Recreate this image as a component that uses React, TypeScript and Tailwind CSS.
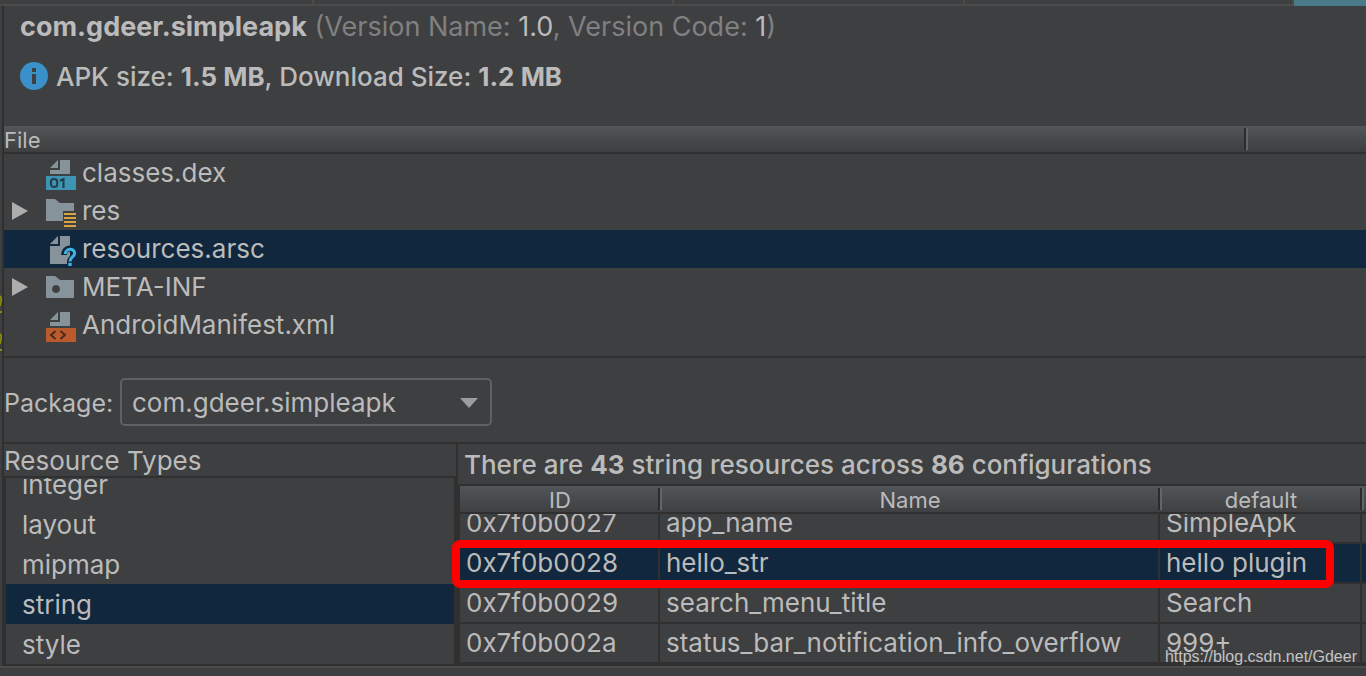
import { useState, type ReactNode } from "react";

const DocShape = ({ tall = false }: { tall?: boolean }) => (
  <g fill="#87939a">
    <path d="M4 8 L12 0 V8 Z" />
    <path d={tall ? "M14 0 H24 V28 H4 V10 H14 Z" : "M14 0 H24 V14 H4 V10 H14 Z"} />
  </g>
);

const DexIcon = () => (
  <svg width="30" height="30" viewBox="0 0 30 30" aria-hidden="true">
    <DocShape />
    <rect y="16" width="30" height="14" fill="#3e94b5" />
    <g fill="none" stroke="#223f4b" strokeWidth="2.1">
      <rect x="5" y="19" width="6.2" height="8" rx="2.8" />
      <path d="M14 20.8 L17.5 19.200 V28" />
    </g>
  </svg>
);

const ResIcon = () => (
  <svg width="30" height="30" viewBox="0 0 30 30" aria-hidden="true">
    <path d="M0 1 H9 L14 5 H28 V13 H17 V23 H0 Z" fill="#87939a" />
    <g fill="#d9a343">
      <rect x="18" y="15" width="12" height="2" />
      <rect x="18" y="19" width="12" height="2" />
      <rect x="18" y="23" width="12" height="2" />
      <rect x="18" y="27" width="12" height="2" />
    </g>
  </svg>
);

const ArscIcon = () => (
  <svg width="30" height="30" viewBox="0 0 30 30" aria-hidden="true">
    <DocShape tall />
    <path d="M18 19 C18 11 29 10 29 18 C29 22 24 21.500 24 26 M24 26 V30" fill="none" stroke="#11273d" strokeWidth="6" />
    <path d="M19.400 18 C19.400 11.800 28.600 11.800 28.600 17.400 C28.600 21 24 21 24 25.400" fill="none" stroke="#3fb3e3" strokeWidth="3" />
    <rect x="22.300" y="26.800" width="3.400" height="3.200" fill="#3fb3e3" />
  </svg>
);

const MetaIcon = () => (
  <svg width="30" height="30" viewBox="0 0 30 30" aria-hidden="true">
    <path fillRule="evenodd" d="M0 2 H9 L14 6 H28 V24 H0 Z M10 11 a4 4 0 1 0 0.010 0 Z" fill="#87939a" />
  </svg>
);

const XmlIcon = () => (
  <svg width="30" height="30" viewBox="0 0 30 30" aria-hidden="true">
    <DocShape />
    <rect y="16" width="30" height="14" fill="#bb5a2c" />
    <path d="M9.500 19 L5 23 L9.500 27 M14.500 19 L19 23 L14.500 27" fill="none" stroke="#4a2a1c" strokeWidth="1.900" />
  </svg>
);

const files: { name: string; icon: ReactNode; folder?: boolean }[] = [
  { name: "classes.dex", icon: <DexIcon /> },
  { name: "res", icon: <ResIcon />, folder: true },
  { name: "resources.arsc", icon: <ArscIcon /> },
  { name: "META-INF", icon: <MetaIcon />, folder: true },
  { name: "AndroidManifest.xml", icon: <XmlIcon /> },
];

const types = ["integer", "layout", "mipmap", "string", "style"];

const resources = [
  ["0x7f0b0027", "app_name", "SimpleApk"],
  ["0x7f0b0028", "hello_str", "hello plugin"],
  ["0x7f0b0029", "search_menu_title", "Search"],
  ["0x7f0b002a", "status_bar_notification_info_overflow", "999+"],
];

const ColumnGrip = () => (
  <span className="absolute right-0 top-[2px] flex h-[22px] translate-x-[2px]">
    <span className="w-[2px] bg-[#2b2b2b]" />
    <span className="w-[2px] bg-[#626668]" />
  </span>
);

function TabStrip() {
  return (
    <div className="flex h-[6px] shrink-0">
      <div className="flex flex-1 border-b-2 border-[#4b4b4b]">
        <div className="w-[314px] border-r-2 border-[#4b4b4b]" />
        <div className="w-[360px] border-r-2 border-[#4b4b4b]" />
        <div className="w-[291px] border-r-2 border-[#4b4b4b]" />
        <div className="flex-1 border-r-2 border-[#4b4b4b]" />
      </div>
      <div className="w-[72px] bg-[#4a7987]" />
    </div>
  );
}

function Gutter() {
  return (
    <div className="w-[2px] shrink-0 pt-[289px]">
      <svg width="2" height="60" viewBox="0 0 2 60" aria-hidden="true">
        <g fill="none" stroke="#8a8a05" strokeWidth="2">
          <path d="M0 1 Q2 3 1 6 T0 11 M0 39 Q2 41 1 44 T0 49" />
          <path d="M0 17 H2 M0 55 H2" />
        </g>
      </svg>
    </div>
  );
}

function Summary() {
  return (
    <header className="flex h-[120px] flex-col pl-4 text-[27px]">
      <h1 className="flex h-[42px] items-center whitespace-pre font-normal text-[#808080]">
        <span>
          <b className="font-bold text-[#bbbbbb]">com.gdeer.simpleapk</b> (Version Name:{" "}
          <span className="text-[#bbbbbb]">1.0</span>, Version Code: <span className="text-[#bbbbbb]">1</span>)
        </span>
      </h1>
      <p className="flex h-[56px] items-center gap-2">
        <svg width="28" height="28" viewBox="0 0 28 28" aria-hidden="true">
          <circle cx="14" cy="14" r="14" fill="#3a90c8" />
          <path d="M12 6 H16 V10 H12 Z M12 12 H16 V22 H12 Z" fill="#3e3f41" />
        </svg>
        <span className="pt-[2px] text-[26px] font-medium">
          APK size: <b className="font-bold">1.5 MB</b>, Download Size: <b className="font-bold">1.2 MB</b>
        </span>
      </p>
    </header>
  );
}

function FileTree() {
  const [selected, setSelected] = useState("resources.arsc");
  return (
    <section className="border-b-2 border-[#303030] pb-3">
      <div className="flex h-[28px] border-b-2 border-[#2f2f30] bg-linear-to-b from-[#515658] to-[#3d3e40] text-[22px] leading-[28px]">
        <div className="relative flex-1">
          File
          <ColumnGrip />
        </div>
        <div className="w-[120px]" />
      </div>
      <ul role="tree" aria-label="File">
        {files.map((f) => (
          <li
            key={f.name}
            role="treeitem"
            aria-selected={f.name === selected}
            onClick={() => setSelected(f.name)}
            className={`flex h-[38px] items-center pl-2 ${f.name === selected ? "bg-[#11273d]" : ""}`}
          >
            <span className="w-[34px]">
              {f.folder && (
                <svg width="16" height="18" viewBox="0 0 16 18" aria-hidden="true">
                  <path d="M0 0 L16 9 L0 18 Z" fill="#adadad" />
                </svg>
              )}
            </span>
            <span className="w-[36px] pt-1">{f.icon}</span>
            {f.name}
          </li>
        ))}
      </ul>
    </section>
  );
}

function PackagePicker() {
  return (
    <div className="flex h-[86px] items-center border-b-2 border-[#303030] pt-1">
      <label htmlFor="package" className="w-[116px] shrink-0 pt-[2px] text-[25px]">Package:</label>
      <div className="relative">
        <select
          id="package"
          className="h-[48px] w-[372px] appearance-none rounded-[5px] border-2 border-[#5f6163] bg-[#3e3f41] pl-[10px] pt-[2px] outline-none"
        >
          <option>com.gdeer.simpleapk</option>
        </select>
        <svg className="pointer-events-none absolute right-[14px] top-[20px]" width="18" height="10" viewBox="0 0 18 10" aria-hidden="true">
          <path d="M0 0 H18 L9 10 Z" fill="#9a9da2" />
        </svg>
      </div>
    </div>
  );
}

function ResourceTypes() {
  const [selected, setSelected] = useState("string");
  return (
    <section className="w-[454px] shrink-0 border-r-2 border-[#303030]">
      <h2 className="h-[32px] leading-[34px]">Resource Types</h2>
      <div className="h-[190px] overflow-hidden border-2 border-[#303030]">
        <ul role="listbox" aria-label="Resource Types" className="-mt-[14px]">
          {types.map((t) => (
            <li
              key={t}
              role="option"
              aria-selected={t === selected}
              onClick={() => setSelected(t)}
              className={`h-[40px] pl-4 leading-[42px] ${t === selected ? "bg-[#11273d]" : ""}`}
            >
              {t}
            </li>
          ))}
        </ul>
      </div>
    </section>
  );
}

function ResourceTable() {
  return (
    <section className="min-w-0 flex-1">
      <p className="h-[40px] pl-[6px] font-medium leading-[42px]">
        There are <b className="font-bold">43</b> string resources across <b className="font-bold">86</b> configurations
      </p>
      <div className="relative border-l-2 border-y-2 border-[#303030]">
        <table className="w-full table-fixed border-separate border-spacing-0 text-left">
          <colgroup>
            <col className="w-[200px]" />
            <col className="w-[500px]" />
            <col className="w-[202px]" />
            <col />
          </colgroup>
          <thead>
            <tr className="bg-linear-to-b from-[#515658] to-[#3d3e40] text-[22px]">
              {["ID", "Name", "default", ""].map((h) => (
                <th key={h} scope="col" className="relative h-[28px] border-b-2 border-[#2f2f30] p-0 pt-[2px] text-center font-normal leading-[24px]">
                  {h}
                  {h && <ColumnGrip />}
                </th>
              ))}
            </tr>
          </thead>
          <tbody>
            {resources.map((row, i) => (
              <tr key={row[0]} className={i === 1 ? "bg-[#11273d]" : ""}>
                {[...row, ""].map((cell, c) => (
                  <td key={c} className={`border-b-2 border-[#303030] p-0 ${c < 3 ? "border-r-2" : ""}`}>
                    <div className={`flex flex-col justify-end overflow-hidden pl-[6px] ${i === 0 ? "h-[28px]" : "h-[38px]"}`}>
                      <span className="shrink-0 leading-[38px]">{cell}</span>
                    </div>
                  </td>
                ))}
              </tr>
            ))}
          </tbody>
        </table>
        <div className="pointer-events-none absolute -left-2 right-8 top-[54px] h-[48px] rounded-lg border-8 border-[#ff0000]" />
      </div>
    </section>
  );
}

export default function App() {
  return (
    <div className="relative flex min-h-screen flex-col overflow-hidden bg-[#3e3f41] font-['Inter','Noto_Sans',sans-serif] text-[26px] leading-[30px] text-[#bbbbbb]">
      <TabStrip />
      <div className="flex">
        <Gutter />
        <div className="min-w-0 flex-1 border-l-2 border-[#303030]">
          <Summary />
          <FileTree />
          <PackagePicker />
          <main className="flex">
            <ResourceTypes />
            <ResourceTable />
          </main>
        </div>
      </div>
      <div className="flex-1 border-t-2 border-[#4b4b4b]" />
      <a
        href="https://blog.csdn.net/Gdeer"
        className="absolute bottom-[8px] right-[9px] font-['Liberation_Sans',sans-serif] text-base leading-[22px] text-[#c4c4c4]"
      >
        https://blog.csdn.net/Gdeer
      </a>
    </div>
  );
}
